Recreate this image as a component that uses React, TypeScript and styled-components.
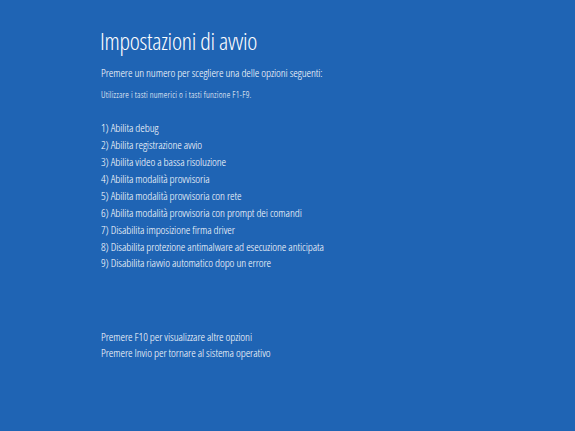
import React from 'react';
import styled, { createGlobalStyle } from 'styled-components';

const GlobalStyle = createGlobalStyle`
  html, body { margin: 0; padding: 0; }
  body {
    background: #1f64b4;
    color: #ffffff;
    font-family: 'Open Sans', 'Noto Sans', 'Liberation Sans', sans-serif;
    font-stretch: 75%;
    font-weight: 300;
  }
`;

const Screen = styled.main`
  width: 575px;
  height: 431px;
  box-sizing: border-box;
  padding: 25.7px 0 0 100px;
  display: flex;
  flex-direction: column;
  overflow: hidden;
`;

const Title = styled.h1`
  margin: 0;
  font-size: 24px;
  line-height: 30px;
  font-weight: 300;
  letter-spacing: -0.25px;
  white-space: nowrap;
`;

const Text = styled.p<{ $size: number; $lh: number; $gap: number; $ls: number }>`
  margin: ${p => p.$gap}px 0 0 0;
  font-size: ${p => p.$size}px;
  line-height: ${p => p.$lh}px;
  letter-spacing: ${p => p.$ls}px;
  white-space: nowrap;
  padding-left: 1px;
`;

const OptionList = styled.ol`
  list-style: none;
  margin: 19px 0 0 0;
  padding: 0 0 0 1px;
  display: flex;
  flex-direction: column;
`;

const Option = styled.li`
  font-size: 11.5px;
  line-height: 16.875px;
  letter-spacing: -0.09px;
  white-space: nowrap;
`;

const Footer = styled.div`
  margin-top: 56.6px;
  display: flex;
  flex-direction: column;
  padding-left: 1px;
`;

const FooterLine = styled.div`
  font-size: 11.5px;
  line-height: 16.5px;
  letter-spacing: -0.09px;
  white-space: nowrap;
`;

const options = [
  'Abilita debug',
  'Abilita registrazione avvio',
  'Abilita video a bassa risoluzione',
  'Abilita modalità provvisoria',
  'Abilita modalità provvisoria con rete',
  'Abilita modalità provvisoria con prompt dei comandi',
  'Disabilita imposizione firma driver',
  'Disabilita protezione antimalware ad esecuzione anticipata',
  'Disabilita riavvio automatico dopo un errore',
];

export default function App() {
  return (
    <>
      <GlobalStyle />
      <Screen>
        <Title>Impostazioni di avvio</Title>
        <Text $size={11.5} $lh={17} $gap={8.5} $ls={-0.1}>
          Premere un numero per scegliere una delle opzioni seguenti:
        </Text>
        <Text $size={9} $lh={12} $gap={8.3} $ls={0.2}>
          Utilizzare i tasti numerici o i tasti funzione F1-F9.
        </Text>
        <OptionList>
          {options.map((o, i) => (
            <Option key={i}>{`${i + 1}) ${o}`}</Option>
          ))}
        </OptionList>
        <Footer>
          <FooterLine>Premere F10 per visualizzare altre opzioni</FooterLine>
          <FooterLine>Premere Invio per tornare al sistema operativo</FooterLine>
        </Footer>
      </Screen>
    </>
  );
}
